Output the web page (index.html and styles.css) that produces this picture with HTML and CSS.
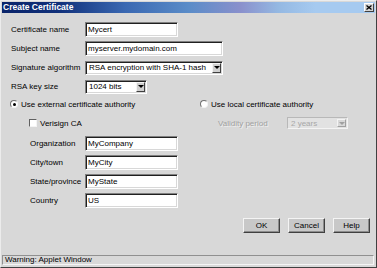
FILE: index.html
```html
<!DOCTYPE html>
<html>
<head>
<meta charset="utf-8">
<link rel="stylesheet" href="styles.css">
</head>
<body>
<div class="window">
  <div class="titlebar">
    <span class="title">Create Certificate</span>
    <span class="close"><svg width="6" height="5" viewBox="0 0 6 5"><path d="M0.5 0.5 L5.5 4.5 M5.5 0.5 L0.5 4.5" stroke="#000" stroke-width="1.3" fill="none"/></svg></span>
  </div>

  <div class="main-grid">
    <span class="lbl">Certificate name</span>
    <div class="field w-short">Mycert</div>
    <span class="lbl">Subject name</span>
    <div class="field w-long">myserver.mydomain.com</div>
    <span class="lbl">Signature algorithm</span>
    <div class="select w-long"><span class="val">RSA encryption with SHA-1 hash</span><span class="arrow"></span></div>
    <span class="lbl">RSA key size</span>
    <div class="select w-key"><span class="val">1024 bits</span><span class="arrow"></span></div>
  </div>

  <div class="options">
    <div class="opt"><span class="radio checked"></span><span>Use external certificate authority</span></div>
    <div class="opt"><span class="radio"></span><span>Use local certificate authority</span></div>
    <div class="opt sub"><span class="check"></span><span>Verisign CA</span></div>
    <div class="opt sub disabled"><span class="vlabel">Validity period</span><div class="select w-valid off"><span class="val">2 years</span><span class="arrow"></span></div></div>
  </div>

  <div class="org-grid">
    <span class="lbl">Organization</span>
    <div class="field w-short">MyCompany</div>
    <span class="lbl">City/town</span>
    <div class="field w-short">MyCity</div>
    <span class="lbl">State/province</span>
    <div class="field w-short">MyState</div>
    <span class="lbl">Country</span>
    <div class="field w-short">US</div>
  </div>

  <div class="buttons">
    <button class="btn">OK</button>
    <button class="btn">Cancel</button>
    <button class="btn">Help</button>
  </div>

  <div class="status">Warning: Applet Window</div>
</div>
</body>
</html>
```

FILE: styles.css
```css
* { box-sizing: border-box; }
html, body { margin: 0; padding: 0; }
body {
  font-family: "Liberation Sans", Arial, sans-serif;
  font-size: 8px;
  color: #000;
  background: #d8d8d8;
}
.window {
  width: 377px;
  height: 268px;
  display: flex;
  flex-direction: column;
  background: #d8d8d8;
  border: 1px solid;
  border-color: #ececec #404040 #404040 #ececec;
  padding: 1px;
}
.titlebar {
  height: 11px;
  display: flex;
  align-items: center;
  justify-content: space-between;
  padding: 0 1px 0 1px;
  color: #fff;
  background: linear-gradient(90deg, #0a246a 0%, #10307a 15%, #3a68b2 33%, #5a8cc8 50%, #8a90cc 64%, #94b8e2 74%, #a6caf0 84%, #a6caf0 100%);
}
.title { font-weight: bold; font-size: 8.5px; line-height: 11px; }
.close {
  width: 10px;
  height: 9px;
  background: #d4d4d4;
  border: 1px solid;
  border-color: #fff #404040 #404040 #fff;
  display: flex;
  align-items: center;
  justify-content: center;
}
.close svg { display: block; }

.lbl { line-height: 10px; white-space: nowrap; }

.main-grid {
  margin-top: 9px;
  padding-left: 9px;
  display: grid;
  grid-template-columns: 74px auto;
  grid-auto-rows: 15px;
  row-gap: 4px;
  align-items: center;
  justify-items: start;
}
.field {
  height: 15px;
  background: #fff;
  border: 1px solid;
  border-color: #808080 #fff #fff #808080;
  box-shadow: inset 1px 1px 0 #202020, inset -1px -1px 0 #d8d8d8;
  padding: 0 2px;
  display: flex;
  align-items: center;
  white-space: nowrap;
  overflow: hidden;
}
.select {
  height: 14px;
  background: #fff;
  border: 1px solid;
  border-color: #808080 #fff #fff #808080;
  box-shadow: inset 1px 1px 0 #202020, inset -1px -1px 0 #d8d8d8;
  padding: 1px 1px 1px 3px;
  display: flex;
  align-items: center;
  white-space: nowrap;
  overflow: hidden;
}
.select .val { flex: 1; }
.arrow {
  width: 9px;
  align-self: stretch;
  background: #d0d0d0;
  border: 1px solid;
  border-color: #f4f4f4 #404040 #404040 #f4f4f4;
  display: flex;
  align-items: center;
  justify-content: center;
}
.arrow::after {
  content: "";
  width: 0;
  height: 0;
  border-top: 3px solid #000;
  border-left: 3px solid transparent;
  border-right: 3px solid transparent;
}
.w-short { width: 93px; }
.w-long { width: 138px; }
.w-key { width: 62px; }
.w-valid { width: 61px; height: 12px; }

.select.off {
  background: #e2e2e2;
  border-color: #b8b8b8 #f4f4f4 #f4f4f4 #b8b8b8;
  box-shadow: none;
  color: #a8a8a8;
}
.select.off .arrow { background: #d8d8d8; border-color: #f4f4f4 #a0a0a0 #a0a0a0 #f4f4f4; }
.select.off .arrow::after { border-top-color: #a0a0a0; }

.options {
  margin-top: 4px;
  padding-left: 8px;
  display: grid;
  grid-template-columns: 190px auto;
  grid-auto-rows: 12px;
  row-gap: 7px;
  align-items: center;
}
.opt { display: flex; align-items: center; gap: 3px; white-space: nowrap; }
.opt.sub { padding-left: 19px; }
.opt.sub.disabled { padding-left: 18px; gap: 0; color: #a0a0a0; }
.vlabel { width: 69px; text-shadow: 1px 1px 0 #f0f0f0; }
.radio {
  width: 8px;
  height: 8px;
  border-radius: 50%;
  background: #fff;
  border: 1px solid;
  border-color: #707070 #f4f4f4 #f4f4f4 #707070;
  display: flex;
  align-items: center;
  justify-content: center;
  flex: none;
}
.radio.checked::after {
  content: "";
  width: 3px;
  height: 3px;
  border-radius: 50%;
  background: #000;
}
.check {
  width: 8px;
  height: 8px;
  background: #fff;
  border: 1px solid;
  border-color: #606060 #f4f4f4 #f4f4f4 #606060;
  flex: none;
}

.org-grid {
  margin-top: 7px;
  padding-left: 28px;
  display: grid;
  grid-template-columns: 55px auto;
  grid-auto-rows: 15px;
  row-gap: 4px;
  align-items: center;
  justify-items: start;
}

.buttons {
  margin-top: 10px;
  padding-right: 5px;
  display: flex;
  justify-content: flex-end;
  gap: 8px;
}
.btn {
  width: 37px;
  height: 15px;
  padding: 0;
  margin: 0;
  font-family: "Liberation Sans", Arial, sans-serif;
  font-size: 8px;
  color: #000;
  background: #c8c8c8;
  border: 1px solid;
  border-color: #f4f4f4 #404040 #404040 #f4f4f4;
  box-shadow: inset -1px -1px 0 #8c8c8c;
}

.status {
  margin-top: auto;
  margin-right: 1px;
  margin-bottom: 1px;
  height: 10px;
  line-height: 8px;
  padding-left: 2px;
  border: 1px solid;
  border-color: #909090 #f4f4f4 #f4f4f4 #909090;
  white-space: nowrap;
}
```
